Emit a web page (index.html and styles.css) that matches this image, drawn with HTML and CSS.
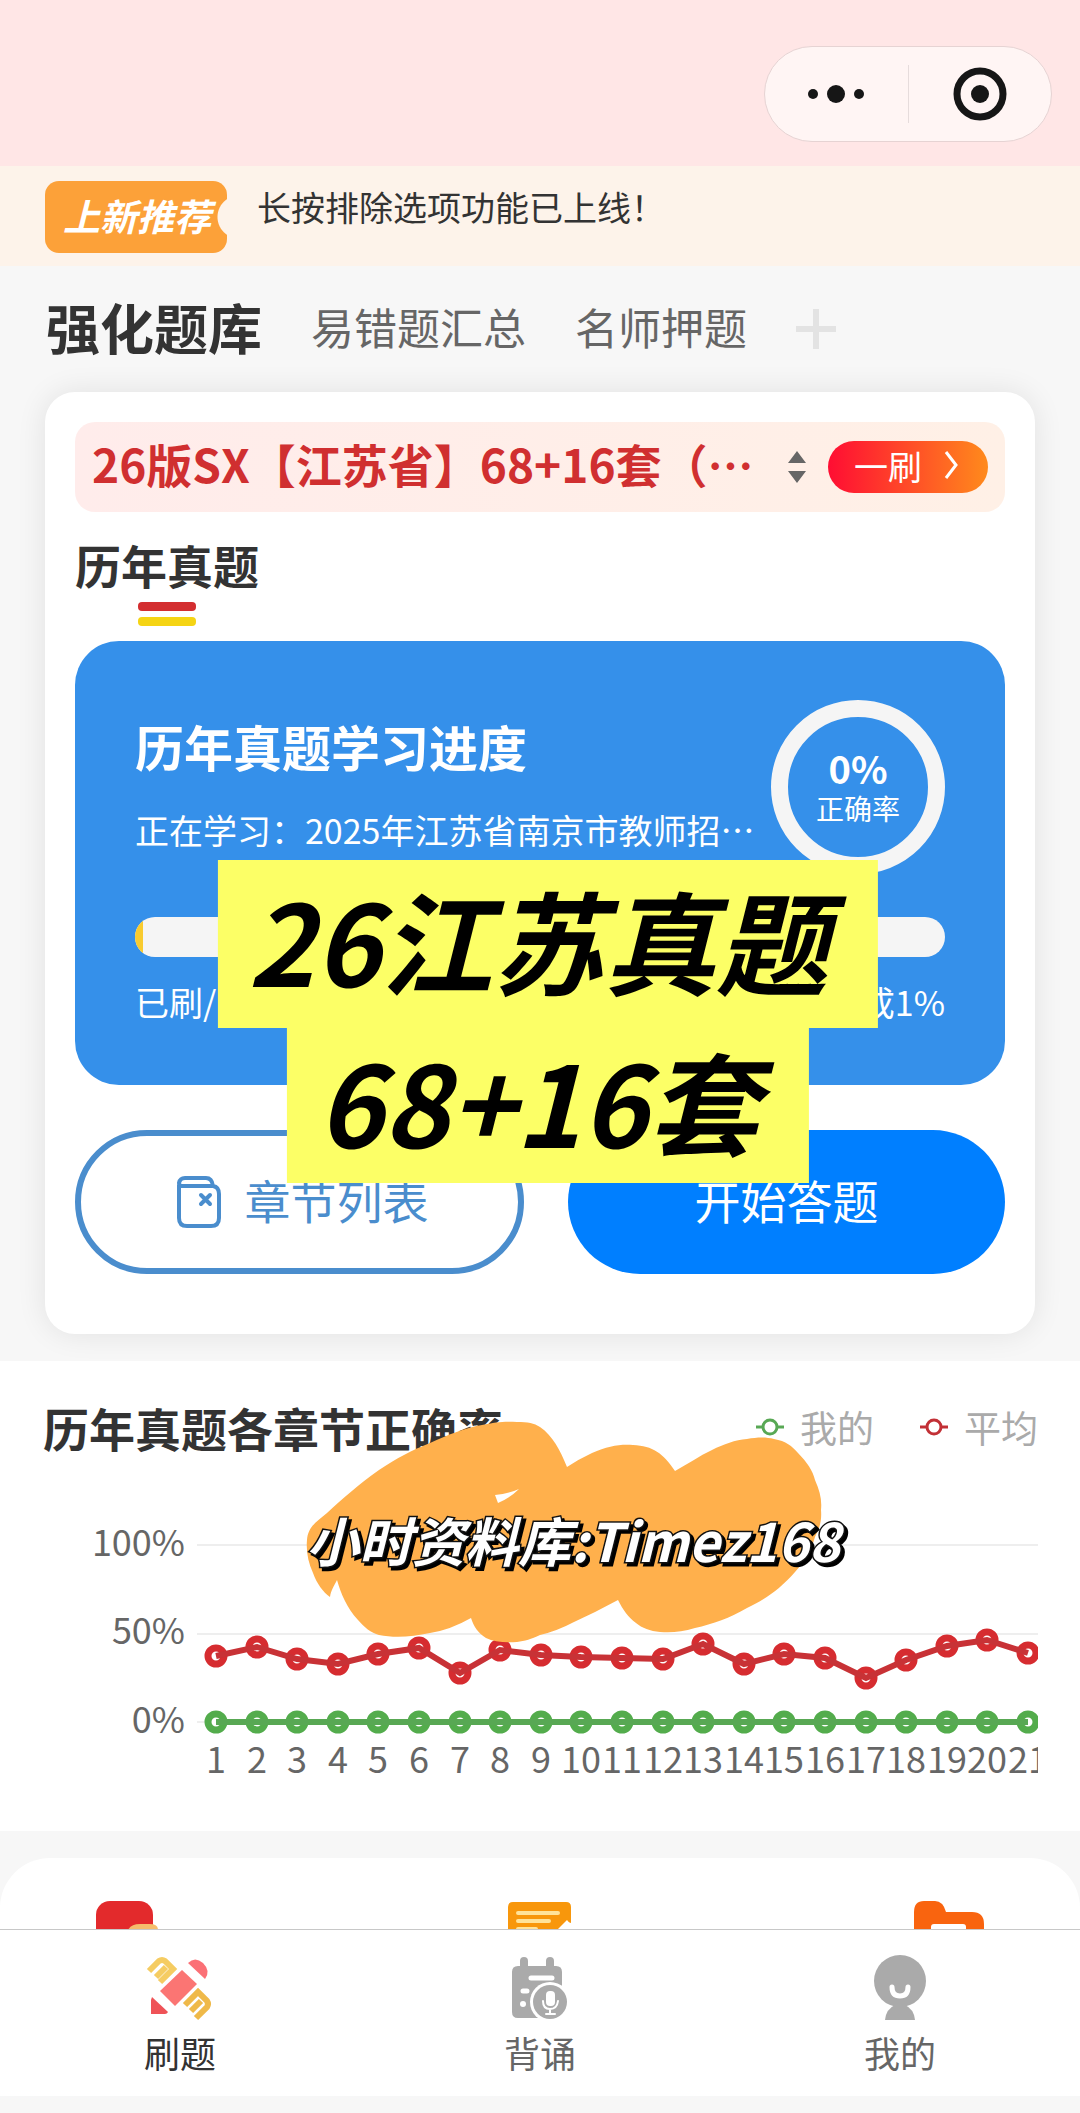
FILE: index.html
```html
<!DOCTYPE html>
<html lang="zh-CN">
<head>
    <meta charset="UTF-8">
    <meta name="viewport" content="width=device-width, initial-scale=1.0">
    <title>强化题库</title>
    <link rel="stylesheet" href="styles.css">
</head>
<body>
    <header class="top">
        <div class="capsule">
            <button type="button" aria-label="更多">
                <svg width="58" height="58" viewBox="0 0 58 58">
                    <circle cx="6" cy="29" r="5"/>
                    <circle cx="29" cy="29" r="9"/>
                    <circle cx="52" cy="29" r="5"/>
                </svg>
            </button>
            <button type="button" aria-label="关闭">
                <svg width="58" height="58" viewBox="0 0 58 58">
                    <circle cx="29" cy="29" r="23" fill="none" stroke="#161616" stroke-width="7"/>
                    <circle cx="29" cy="29" r="9"/>
                </svg>
            </button>
        </div>
    </header>

    <div class="notice">
        <span class="badge">上新推荐</span>
        <p>长按排除选项功能已上线！</p>
    </div>

    <nav class="tabs">
        <a class="on" href="#">强化题库</a>
        <a href="#">易错题汇总</a>
        <a href="#">名师押题</a>
        <button type="button" aria-label="添加">
            <svg width="40" height="40" viewBox="0 0 40 40">
                <path d="M20 0V40M0 20H40" stroke="#e3e3e3" stroke-width="6"/>
            </svg>
        </button>
    </nav>

    <main>
        <section class="card">
            <div class="picker">
                <select aria-label="题库">
                    <option>26版SX【江苏省】68+16套（…</option>
                </select>
                <svg class="updown" width="18" height="32" viewBox="0 0 18 32">
                    <path d="M9 0L18 12H0ZM9 32L18 20H0Z" fill="#666"/>
                </svg>
                <button type="button" class="round">
                    一刷
                    <svg width="14" height="30" viewBox="0 0 14 30">
                        <path d="M2 2L12 15L2 28" fill="none" stroke="#fff" stroke-width="3"/>
                    </svg>
                </button>
            </div>

            <h2 class="subject">历年真题</h2>

            <div class="progress">
                <div class="info">
                    <div class="info_text">
                        <h3>历年真题学习进度</h3>
                        <p>正在学习：2025年江苏省南京市教师招…</p>
                    </div>
                    <div class="ring">
                        <strong>0%</strong>
                        <span>正确率</span>
                    </div>
                </div>
                <div class="bar"><div style="width: 1%"></div></div>
                <div class="count">
                    <span>已刷/</span>
                    <span>完成1%</span>
                </div>
            </div>

            <div class="actions">
                <button type="button" class="line">
                    <svg width="44" height="52" viewBox="0 0 44 52" fill="none" stroke="#4a8dcd" stroke-width="4" stroke-linecap="round" stroke-linejoin="round">
                        <path d="M2 9V42Q2 50 10 50H34Q42 50 42 42V18Q42 11 36 10H5Q2 10 2 7Q3 2 8 2H29Q35 2 36 10"/>
                        <path d="M24 19L33 28M33 19L24 28"/>
                    </svg>
                    章节列表
                </button>
                <button type="button" class="fill">开始答题</button>
            </div>

            <div class="sticker">
                <span>26江苏真题</span>
                <span>68+16套</span>
            </div>
        </section>

        <section class="stats">
            <div class="stats_head">
                <h2>历年真题各章节正确率</h2>
                <ul class="legend">
                    <li>
                        <svg width="28" height="18" viewBox="0 0 28 18" fill="#fff" stroke="#58a854" stroke-width="3">
                            <path d="M0 9H28"/>
                            <circle cx="14" cy="9" r="7"/>
                        </svg>
                        我的
                    </li>
                    <li>
                        <svg width="28" height="18" viewBox="0 0 28 18" fill="#fff" stroke="#c23036" stroke-width="3">
                            <path d="M0 9H28"/>
                            <circle cx="14" cy="9" r="7"/>
                        </svg>
                        平均
                    </li>
                </ul>
            </div>

            <svg class="chart" viewBox="0 0 995 371">
                <defs>
                    <marker id="dot_red" markerUnits="userSpaceOnUse" markerWidth="26" markerHeight="26" refX="13" refY="13">
                        <circle cx="13" cy="13" r="8" fill="#fff" stroke="#d62c30" stroke-width="7"/>
                    </marker>
                    <marker id="dot_green" markerUnits="userSpaceOnUse" markerWidth="26" markerHeight="26" refX="13" refY="13">
                        <circle cx="13" cy="13" r="8" fill="#fff" stroke="#53ac4c" stroke-width="7"/>
                    </marker>
                </defs>
                <path d="M154 87H995M154 176H995M154 264H995" stroke="#eee" stroke-width="2"/>
                <g class="y_axis">
                    <text x="142" y="98">100%</text>
                    <text x="142" y="186">50%</text>
                    <text x="142" y="275">0%</text>
                </g>
                <g id="lines"></g>
                <g id="x_axis" class="x_axis"></g>
            </svg>

            <svg class="brush" width="570" height="240" viewBox="0 0 570 240">
                <path fill="#ffb04c" d="M7 125C8 112 16 107 27 98C42 84 58 70 79 55C97 43 112 35 130 28C148 20 164 13 182 10C196 7 205 6 217 7C228 7 234 8 240 12C253 21 260 35 267 52Q279 44 292 38C308 31 320 29 333 30C353 31 363 38 375 56C388 49 399 41 412 35C424 29 435 25 447 24C458 22 466 22 474 24C486 26 492 31 498 38C507 47 513 56 515 65C520 76 522 85 521 95C522 107 519 114 515 122C511 136 504 147 495 157C480 174 466 184 447 193C430 203 413 209 395 213C382 217 371 218 360 217C350 216 342 213 336 208C328 202 323 195 318 185Q296 197 274 207Q257 216 240 220C231 224 225 226 217 227C205 228 194 227 186 223C178 218 174 212 171 203Q150 215 130 218C112 222 94 223 79 220C71 218 64 212 58 205C47 193 41 179 37 165C34 171 31 175 30 182C23 177 17 169 13 158C8 147 6 136 7 125Z"/>
                <path fill="#fff" d="M195 80Q208 79 219 74Q210 83 198 88Z"/>
                <text x="6" y="147">小时资料库:Timez168</text>
            </svg>
        </section>

        <section class="entry">
            <svg width="70" height="60" viewBox="0 0 70 60">
                <rect width="57" height="60" rx="14" fill="#e32a2c"/>
                <path d="M32 29Q35 23 44 23H54Q62 23 62 29V60H32Z" fill="#f6bd6c"/>
            </svg>
            <svg width="64" height="60" viewBox="0 0 64 60">
                <path d="M5 1H58Q63 1 63 6V22Q57 19 53 27H64V60H0V6Q0 1 5 1Z" fill="#f8970c"/>
                <path d="M10 12H50M10 20H41M10 28H28" stroke="#ffe39a" stroke-width="4" stroke-linecap="round"/>
                <path d="M50 28L59 19L64 25V28Z" fill="#fff"/>
            </svg>
            <svg width="70" height="60" viewBox="0 0 70 60">
                <path d="M0 60V11Q0 0 10 0H21Q29 0 32 11H58Q70 11 70 23V60Z" fill="#f9640f"/>
                <rect x="17" y="23" width="35" height="20" rx="3" fill="#fff"/>
            </svg>
        </section>
    </main>

    <nav class="tabbar">
        <a class="on" href="#">
            <svg width="68" height="68" viewBox="0 0 68 68">
                <path d="M3 17L13 7Q16 5 19 7L27 15L14 28M10 23L20 13" fill="none" stroke="#f5cc62" stroke-width="6"/>
                <path d="M39 51L52 38L61 47Q63 50 61 53L50 64M45 57L55 47" fill="none" stroke="#efb949" stroke-width="6"/>
                <path d="M36 16L51 30L29 52L14 37Z" fill="#fb7573"/>
                <path d="M42 9Q49 2 57 9Q65 17 59 25Z" fill="#fb7076"/>
                <path d="M6 43L22 58Q21 60 19 60H5V46Z" fill="#ef5357"/>
            </svg>
            刷题
        </a>
        <a href="#">
            <svg width="68" height="68" viewBox="0 0 68 68">
                <path d="M12 12H14V7Q14 3 18 3T22 7V12H40V7Q40 3 44 3T48 7V12H50Q56 12 56 18V64H12Q6 64 6 58V18Q6 12 12 12Z" fill="#aaa"/>
                <path d="M25 24H46M17 37H21" stroke="#fff" stroke-width="5" stroke-linecap="round"/>
                <circle cx="17" cy="50" r="3" fill="#fff"/>
                <circle cx="44" cy="48" r="20" fill="#fff"/>
                <circle cx="44" cy="48" r="17" fill="#aaa"/>
                <rect x="40" y="37" width="9" height="15" rx="4" fill="#fff"/>
                <path d="M37 47Q37 55 44 55T52 47M44 55V60M40 60H49" fill="none" stroke="#fff" stroke-width="2" stroke-linecap="round"/>
            </svg>
            背诵
        </a>
        <a href="#">
            <svg width="68" height="68" viewBox="0 0 68 68" fill="#aaa">
                <ellipse cx="34" cy="27" rx="26" ry="26"/>
                <path d="M29 51H39Q48 55 49 66H19Q20 55 29 51Z"/>
                <path d="M26 33Q26 42 34 42T42 33" fill="none" stroke="#fff" stroke-width="5" stroke-linecap="round"/>
            </svg>
            我的
        </a>
    </nav>

    <script>
        const average = [198, 189, 201, 206, 196, 190, 215, 192, 197, 199, 200, 201, 186, 206, 196, 200, 220, 202, 188, 182, 195];
        const mine = average.map(() => 264);
        const lines = document.querySelector('#lines');
        const xAxis = document.querySelector('#x_axis');

        function getX(i) {
            return Math.round(173 + i * 40.6);
        }

        function drawLine(list, name, color) {
            const points = list.map((y, i) => getX(i) + ',' + y).join(' ');
            const dot = `url(#dot_${name})`;
            lines.innerHTML += `
                <polyline points="${points}" fill="none" marker-start="${dot}" marker-mid="${dot}" marker-end="${dot}"/>
                <polyline points="${points}" fill="none" stroke="${color}" stroke-width="6"/>`;
        }

        drawLine(mine, 'green', '#58a854');
        drawLine(average, 'red', '#c83236');
        xAxis.innerHTML = average.map((y, i) => `<text x="${getX(i)}" y="315">${i + 1}</text>`).join('');
    </script>
</body>
</html>
```

FILE: styles.css
```css
* {
    margin: 0;
    padding: 0;
    box-sizing: border-box;
}

body {
    background-color: #f7f7f7;
    color: #333;
    font-family: "Noto Sans CJK SC", sans-serif;
}

li {
    list-style: none;
}

a {
    color: inherit;
    text-decoration: none;
}

button,
select {
    border: 0;
    background: none;
    color: inherit;
    font: inherit;
    appearance: none;
}

svg {
    display: block;
    flex: none;
}

/* 顶部 */
.top {
    display: flex;
    justify-content: flex-end;
    padding: 46px 28px 24px;
    background-color: #ffe6e6;
}

.capsule {
    display: flex;
    align-items: center;
    width: 288px;
    height: 96px;
    border: 1px solid #e6d3d3;
    border-radius: 48px;
    background-color: #fff5f4;
}

.capsule button {
    display: flex;
    justify-content: center;
    flex: 1;
}

.capsule svg {
    fill: #161616;
}

.capsule button + button {
    border-left: 1px solid #e6dcdc;
}

.notice {
    display: flex;
    gap: 30px;
    padding: 15px 45px 13px;
    background-color: #fdf3ea;
}

.notice p {
    font-size: 34px;
    line-height: 52px;
}

.badge {
    width: 182px;
    height: 72px;
    padding-left: 18px;
    border-radius: 14px;
    background: radial-gradient(circle at 194px 36px, #fdf3ea 21px, #fca139 22px);
    color: #fff;
    font-size: 37px;
    font-weight: 700;
    font-style: italic;
    line-height: 68px;
    white-space: nowrap;
}

.tabs {
    display: flex;
    align-items: center;
    gap: 49px;
    height: 126px;
    padding: 0 46px 6px;
    color: #666;
    font-size: 43px;
}

.tabs .on {
    color: #333;
    font-size: 54px;
    font-weight: 700;
}

.tabs svg {
    margin-top: 6px;
}

/* 题库卡片 */
.card {
    position: relative;
    margin: 0 45px 27px;
    padding: 30px 30px 60px;
    border-radius: 30px;
    background-color: #fff;
    box-shadow: 0 0 30px rgba(0, 0, 0, 0.09);
}

.picker {
    display: flex;
    align-items: center;
    height: 90px;
    padding: 0 17px;
    border-radius: 20px;
    background: linear-gradient(90deg, #ffeceb, #fff0e6);
}

.picker select {
    flex: 1;
    min-width: 0;
    padding-bottom: 8px;
    color: #d02f30;
    font-size: 46px;
    font-weight: 700;
}

.updown {
    margin: 0 22px;
}

.round {
    display: flex;
    align-items: center;
    justify-content: center;
    gap: 22px;
    width: 160px;
    height: 52px;
    padding: 0 4px 4px 0;
    border-radius: 26px;
    background: linear-gradient(90deg, #ff0d33, #ff8a1c);
    color: #fff;
    font-size: 34px;
}

.subject {
    position: relative;
    height: 129px;
    padding-top: 20px;
    font-size: 46px;
    font-weight: 700;
    line-height: 64px;
}

.subject::before,
.subject::after {
    content: "";
    position: absolute;
    left: 63px;
    top: 90px;
    width: 58px;
    height: 9px;
    border-radius: 4px;
    background-color: #d32e30;
}

.subject::after {
    top: 105px;
    background-color: #f5d414;
}

.progress {
    padding: 59px 60px 53px;
    border-radius: 44px;
    background-color: #3590ea;
    color: #fff;
}

.info {
    display: flex;
    justify-content: space-between;
}

.info_text {
    padding-top: 10px;
    white-space: nowrap;
}

.info h3 {
    font-size: 49px;
    line-height: 72px;
}

.info p {
    margin-top: 20px;
    font-size: 34px;
    line-height: 56px;
}

.ring {
    display: flex;
    flex-direction: column;
    align-items: center;
    width: 174px;
    height: 174px;
    padding-top: 29px;
    border: 17px solid #f5f5f5;
    border-radius: 50%;
}

.ring strong {
    font-size: 38px;
    line-height: 44px;
}

.ring span {
    font-size: 28px;
    line-height: 36px;
}

.bar {
    height: 40px;
    margin: 43px 0 17px;
    border-radius: 20px;
    background-color: #f5f5f5;
    overflow: hidden;
}

.bar div {
    height: 100%;
    background-color: #f8cb2f;
}

.count {
    display: flex;
    justify-content: space-between;
    margin-bottom: 2px;
    font-size: 34px;
    line-height: 56px;
}

.actions {
    display: grid;
    grid-template-columns: 449fr 437fr;
    gap: 44px;
    margin-top: 45px;
}

.actions button {
    display: flex;
    align-items: center;
    justify-content: center;
    gap: 24px;
    height: 144px;
    padding-bottom: 6px;
    border-radius: 72px;
    font-size: 46px;
}

.actions svg {
    margin-top: 6px;
}

.actions .line {
    padding-left: 6px;
    border: 6px solid #4a8dcd;
    color: #4a8dcd;
}

.actions .fill {
    background-color: #007fff;
    color: #fff;
}

.sticker {
    position: absolute;
    top: 468px;
    left: 50%;
    display: flex;
    flex-direction: column;
    align-items: center;
    transform: translateX(-50%);
    margin-left: 8px;
    color: #000;
    font-size: 112px;
    font-weight: 700;
    font-style: italic;
    line-height: 156px;
    white-space: nowrap;
}

.sticker span {
    padding: 0 50px 12px 30px;
    background-color: #fcff66;
}

.sticker span + span {
    line-height: 143px;
}

/* 正确率 */
.stats {
    position: relative;
    padding: 36px 42px 2px 43px;
    background-color: #fff;
}

.stats_head {
    display: flex;
    justify-content: space-between;
    height: 60px;
    line-height: 60px;
}

.stats h2 {
    font-size: 46px;
}

.legend {
    display: flex;
    gap: 46px;
    color: #aaa;
    font-size: 37px;
}

.legend li {
    display: flex;
    align-items: center;
    gap: 16px;
}

.chart {
    width: 100%;
    margin-top: 1px;
    fill: #666;
    font-size: 36px;
}

.y_axis {
    text-anchor: end;
}

.x_axis {
    text-anchor: middle;
}

.brush {
    position: absolute;
    top: 54px;
    left: 300px;
}

.brush text {
    fill: #fff;
    stroke: #111;
    stroke-width: 3px;
    paint-order: stroke;
    filter: drop-shadow(3px 3px 0 #000);
    font-size: 53px;
    font-weight: 700;
    font-style: italic;
}

/* 入口，下半部分在标签栏后面 */
.entry {
    display: flex;
    justify-content: space-between;
    height: 71px;
    margin-top: 27px;
    padding: 43px 96px 0;
    border-radius: 50px 50px 0 0;
    background-color: #fff;
    overflow: hidden;
}

.tabbar {
    display: flex;
    margin-bottom: 18px;
    padding: 24px 0 14px;
    border-top: 1px solid #c8c8c8;
    background-color: #fff;
    color: #666;
    font-size: 36px;
    line-height: 60px;
}

.tabbar a {
    display: flex;
    flex-direction: column;
    align-items: center;
    flex: 1;
}

.tabbar .on {
    color: #333;
}
```
